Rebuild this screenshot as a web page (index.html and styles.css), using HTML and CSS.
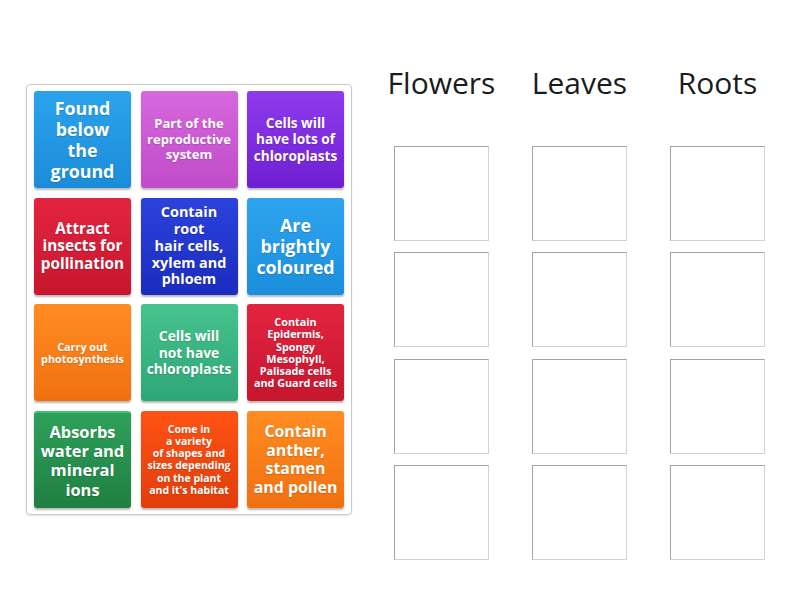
FILE: index.html
```html
<!DOCTYPE html>
<html>
<head>
<meta charset="utf-8">
<link rel="stylesheet" href="styles.css">
</head>
<body>
<div class="page">
  <div class="panel">
    <div class="tile blue"><span class="t t18">Found<br>below<br>the<br>ground</span></div>
    <div class="tile pink"><span class="t t13">Part of the<br>reproductive<br>system</span></div>
    <div class="tile purple"><span class="t t135">Cells will<br>have lots of<br>chloroplasts</span></div>

    <div class="tile red"><span class="t t15">Attract<br>insects for<br>pollination</span></div>
    <div class="tile navy"><span class="t t145">Contain<br>root<br>hair cells,<br>xylem and<br>phloem</span></div>
    <div class="tile sky"><span class="t t18">Are<br>brightly<br>coloured</span></div>

    <div class="tile orange"><span class="t t11">Carry out<br>photosynthesis</span></div>
    <div class="tile mint"><span class="t t137">Cells will<br>not have<br>chloroplasts</span></div>
    <div class="tile red"><span class="t t11">Contain<br>Epidermis,<br>Spongy<br>Mesophyll,<br>Palisade cells<br>and Guard cells</span></div>

    <div class="tile green"><span class="t t165">Absorbs<br>water and<br>mineral<br>ions</span></div>
    <div class="tile flame"><span class="t t105">Come in<br>a variety<br>of shapes and<br>sizes depending<br>on the plant<br>and it's habitat</span></div>
    <div class="tile orange"><span class="t t16">Contain<br>anther,<br>stamen<br>and pollen</span></div>
  </div>

  <div class="groups">
    <div class="col">
      <div class="heading">Flowers</div>
      <div class="slots"><div class="slot"></div><div class="slot"></div><div class="slot"></div><div class="slot"></div></div>
    </div>
    <div class="col">
      <div class="heading">Leaves</div>
      <div class="slots"><div class="slot"></div><div class="slot"></div><div class="slot"></div><div class="slot"></div></div>
    </div>
    <div class="col">
      <div class="heading">Roots</div>
      <div class="slots"><div class="slot"></div><div class="slot"></div><div class="slot"></div><div class="slot"></div></div>
    </div>
  </div>
</div>
</body>
</html>
```
FILE: styles.css
```css
html, body {
  margin: 0;
  padding: 0;
  background: #ffffff;
  font-family: "Open Sans", "DejaVu Sans", sans-serif;
}

.page {
  display: flex;
  align-items: flex-start;
  width: 800px;
  height: 600px;
}

.panel {
  box-sizing: border-box;
  width: 326px;
  height: 431px;
  margin-top: 84px;
  margin-left: 26px;
  padding: 6px 7px;
  border: 1px solid #c9c9c9;
  border-radius: 4px;
  box-shadow: 0 1px 2px rgba(0, 0, 0, 0.12);
  display: grid;
  grid-template-columns: repeat(3, 97px);
  grid-template-rows: repeat(4, 97px);
  column-gap: 9.5px;
  row-gap: 9.67px;
}

.tile {
  border-radius: 3px;
  display: flex;
  align-items: center;
  justify-content: center;
  text-align: center;
  color: #ffffff;
  box-shadow: 0 2px 2px rgba(0, 0, 0, 0.28);
  padding: 0 5px;
}

.t {
  font-weight: 700;
  line-height: 1.17;
  text-shadow: 0 1px 1px rgba(0, 0, 0, 0.15);
  white-space: nowrap;
}

.t18 { font-size: 17.8px; line-height: 21px; }
.t13 { font-size: 13px; line-height: 15.5px; }
.t135 { font-size: 13.6px; line-height: 16.2px; }
.t137 { font-size: 13.8px; line-height: 16.4px; }
.t15 { font-size: 15.3px; line-height: 17.5px; }
.t145 { font-size: 14.4px; line-height: 16.7px; }
.t11 { font-size: 10.8px; line-height: 12.2px; }
.t105 { font-size: 10.5px; line-height: 12.2px; }
.t165 { font-size: 16.4px; line-height: 19.3px; }
.t16 { font-size: 15.9px; line-height: 18.6px; }

.blue   { background: linear-gradient(#2ba3ec, #1b8cd9); }
.pink   { background: linear-gradient(#d768dc, #c04bc9); }
.purple { background: linear-gradient(#8f3bec, #6f1fd3); }
.red    { background: linear-gradient(#e3243f, #c7162f); }
.navy   { background: linear-gradient(#2c42dc, #1b2cbf); }
.sky    { background: linear-gradient(#2ea3ee, #1b8fdc); }
.orange { background: linear-gradient(#ff8c22, #f07010); }
.mint   { background: linear-gradient(#45c38e, #2fa676); }
.green  { background: linear-gradient(#2ea05a, #1f7f42); border-top: 2px solid #3cc56c; }
.flame  { background: linear-gradient(#ff5214, #e23d0b); }

.groups {
  display: flex;
  margin-left: 20.5px;
  margin-top: 63px;
}

.col {
  width: 138px;
  display: flex;
  flex-direction: column;
  align-items: center;
}

.heading {
  height: 40px;
  line-height: 40px;
  font-size: 30px;
  color: #1b1b1b;
  white-space: nowrap;
  margin-bottom: 43px;
}

.slots {
  display: flex;
  flex-direction: column;
  gap: 11.33px;
}

.slot {
  box-sizing: border-box;
  width: 95px;
  height: 95px;
  border-top: 1px solid #a4a4a4;
  border-left: 1px solid #a4a4a4;
  border-right: 1px solid #d2d2d2;
  border-bottom: 1px solid #d2d2d2;
  background: #ffffff;
}
```
